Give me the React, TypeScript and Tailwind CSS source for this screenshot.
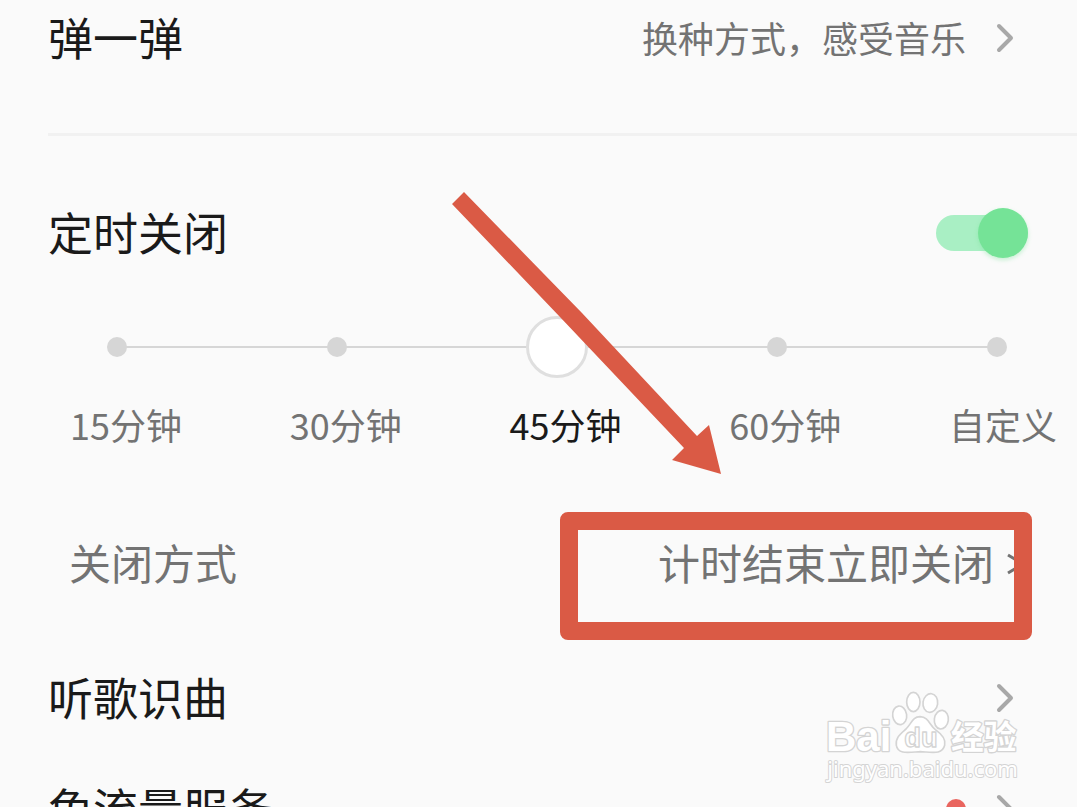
import { useState } from "react";
import type { ReactNode } from "react";

const TIMES = ["15分钟", "30分钟", "45分钟", "60分钟", "自定义"];

function Chevron() {
  return (
    <svg width="18" height="30" viewBox="0 0 18 30" fill="none" className="shrink-0" aria-hidden="true">
      <path d="M3 3 L15 15 L3 27" stroke="#a8a8a8" strokeWidth="4" strokeLinecap="round" strokeLinejoin="round" />
    </svg>
  );
}

function LinkRow({ title, children }: { title: string; children?: ReactNode }) {
  return (
    <a href="#" className="flex items-center justify-between pl-12 pr-[63px] h-[76px]">
      <span className="pb-[3px] text-[45px] leading-[64px] text-[#1a1a1a]">{title}</span>
      <span className="flex items-center gap-[30px]">
        {children}
        <Chevron />
      </span>
    </a>
  );
}

function Arrow() {
  return (
    <svg
      width="270"
      height="283"
      viewBox="0 0 270 283"
      className="absolute left-[452px] top-[56px] pointer-events-none"
      aria-hidden="true"
    >
      <path d="M0 12 L12 0 L130 121 L245 244 L257 233 L269 282 L220 268 L232 256 L108 125 Z" fill="#da5a45" />
    </svg>
  );
}

function Watermark() {
  return (
    <svg
      width="277"
      height="137"
      viewBox="0 0 831 411"
      className="absolute bottom-0 right-0 pointer-events-none"
      fill="#ffffff"
      stroke="#d4d4d4"
      strokeWidth="5"
      strokeLinejoin="round"
    >
      <ellipse cx="340" cy="96" rx="20" ry="29" />
      <ellipse cx="391" cy="99" rx="22" ry="28" transform="rotate(8 391 99)" />
      <ellipse cx="299" cy="136" rx="21" ry="28" transform="rotate(-8 299 136)" />
      <ellipse cx="424" cy="149" rx="21" ry="28" transform="rotate(8 424 149)" />
      <path d="M360 140 C386 141 388 165 406 179 C426 193 439 207 434 226 C427 254 399 247 361 245 C325 247 294 254 289 226 C286 202 302 191 318 177 C335 160 338 140 360 140 Z" />
      <g paintOrder="stroke" strokeWidth="8">
        <text x="78" y="243" fontSize="126" className="font-['Liberation_Sans',sans-serif] font-bold">Bai</text>
        <text x="453" y="236" fontSize="98" className="font-['Noto_Sans_CJK_SC',sans-serif] font-bold">经验</text>
      </g>
      <text x="313" y="232" fontSize="82" strokeWidth="4" className="font-['Liberation_Sans',sans-serif] font-bold">du</text>
      <text x="82" y="320" fontSize="66" strokeWidth="6" paintOrder="stroke" className="font-['Noto_Sans',sans-serif]">
        jingyan.baidu.com
      </text>
    </svg>
  );
}

export default function App() {
  const [enabled, setEnabled] = useState(true);
  const [time, setTime] = useState(2);

  return (
    <main className="relative h-screen overflow-hidden bg-[#fafafa] font-['Noto_Sans_CJK_SC',sans-serif]">
      <LinkRow title="弹一弹">
        <span className="pb-[3px] text-4xl leading-[52px] text-[#737373]">换种方式，感受音乐</span>
      </LinkRow>

      <hr className="ml-12 mt-[57px] border-t-[3px] border-[#f1f1f1]" />

      {/* sleep timer */}
      <section className="relative pt-16">
        <label className="flex items-center justify-between h-[66px] pl-12 pr-[49px]">
          <span className="pb-[3px] text-[45px] leading-[64px] text-[#1a1a1a]">定时关闭</span>
          <input
            type="checkbox"
            role="switch"
            checked={enabled}
            onChange={(e) => setEnabled(e.target.checked)}
            className="relative appearance-none w-[92px] h-9 rounded-full bg-[#dddddd] checked:bg-[#a9efc4] before:absolute before:left-0 before:-top-[7px] before:size-[50px] before:rounded-full before:bg-[#bbbbbb] checked:before:left-[42px] checked:before:bg-[#75e397] before:shadow-[0_2px_4px_#75e39766]"
          />
        </label>

        <div className="grid items-center mt-[50px] ml-[86px] mr-[49px]">
          <div className="col-start-1 row-start-1 mx-[31px] h-[2px] bg-[#d6d6d6]" />
          <div className="col-start-1 row-start-1 mx-[21px] flex justify-between">
            {TIMES.map((t) => (
              <span key={t} className="size-5 rounded-full bg-[#d6d6d6]" />
            ))}
          </div>
          <input
            type="range"
            min={0}
            max={4}
            value={time}
            onChange={(e) => setTime(Number(e.target.value))}
            aria-label="定时关闭时间"
            className="relative col-start-1 row-start-1 w-full h-[62px] appearance-none bg-transparent [&::-webkit-slider-thumb]:appearance-none [&::-webkit-slider-thumb]:size-[62px] [&::-webkit-slider-thumb]:rounded-full [&::-webkit-slider-thumb]:border-[3px] [&::-webkit-slider-thumb]:border-[#dfdfdf] [&::-webkit-slider-thumb]:bg-white"
          />
        </div>

        <div className="flex justify-between mt-5 pl-[70px] pr-5">
          {TIMES.map((t, i) => (
            <button
              key={t}
              type="button"
              onClick={() => setTime(i)}
              className={`text-4xl leading-[52px] ${i === time ? "text-[#1a1a1a]" : "text-[#737373]"}`}
            >
              {t}
            </button>
          ))}
        </div>

        <Arrow />
      </section>

      <div className="relative mt-[62px]">
        <button
          type="button"
          className="flex w-full items-center justify-between h-32 pb-6 pl-[69px] pr-[51px] text-[42px] leading-[60px] text-[#737373]"
        >
          <span className="pb-1">关闭方式</span>
          <span className="flex items-center gap-3">
            <span className="pb-1">计时结束立即关闭</span>
            <svg width="20" height="22" viewBox="0 0 20 22" fill="none" aria-hidden="true">
              <path d="M2 2 L17 11 L2 20" stroke="#737373" strokeWidth="3" />
            </svg>
          </span>
        </button>
        <div className="absolute inset-y-0 right-[45px] w-[472px] rounded-lg border-[18px] border-[#da5a45] pointer-events-none" />
      </div>

      <div className="mt-5 flex flex-col gap-[35px]">
        <LinkRow title="听歌识曲" />
        <LinkRow title="免流量服务">
          <span className="size-5 rounded-full bg-[#e9655f]" />
        </LinkRow>
      </div>

      <Watermark />
    </main>
  );
}
